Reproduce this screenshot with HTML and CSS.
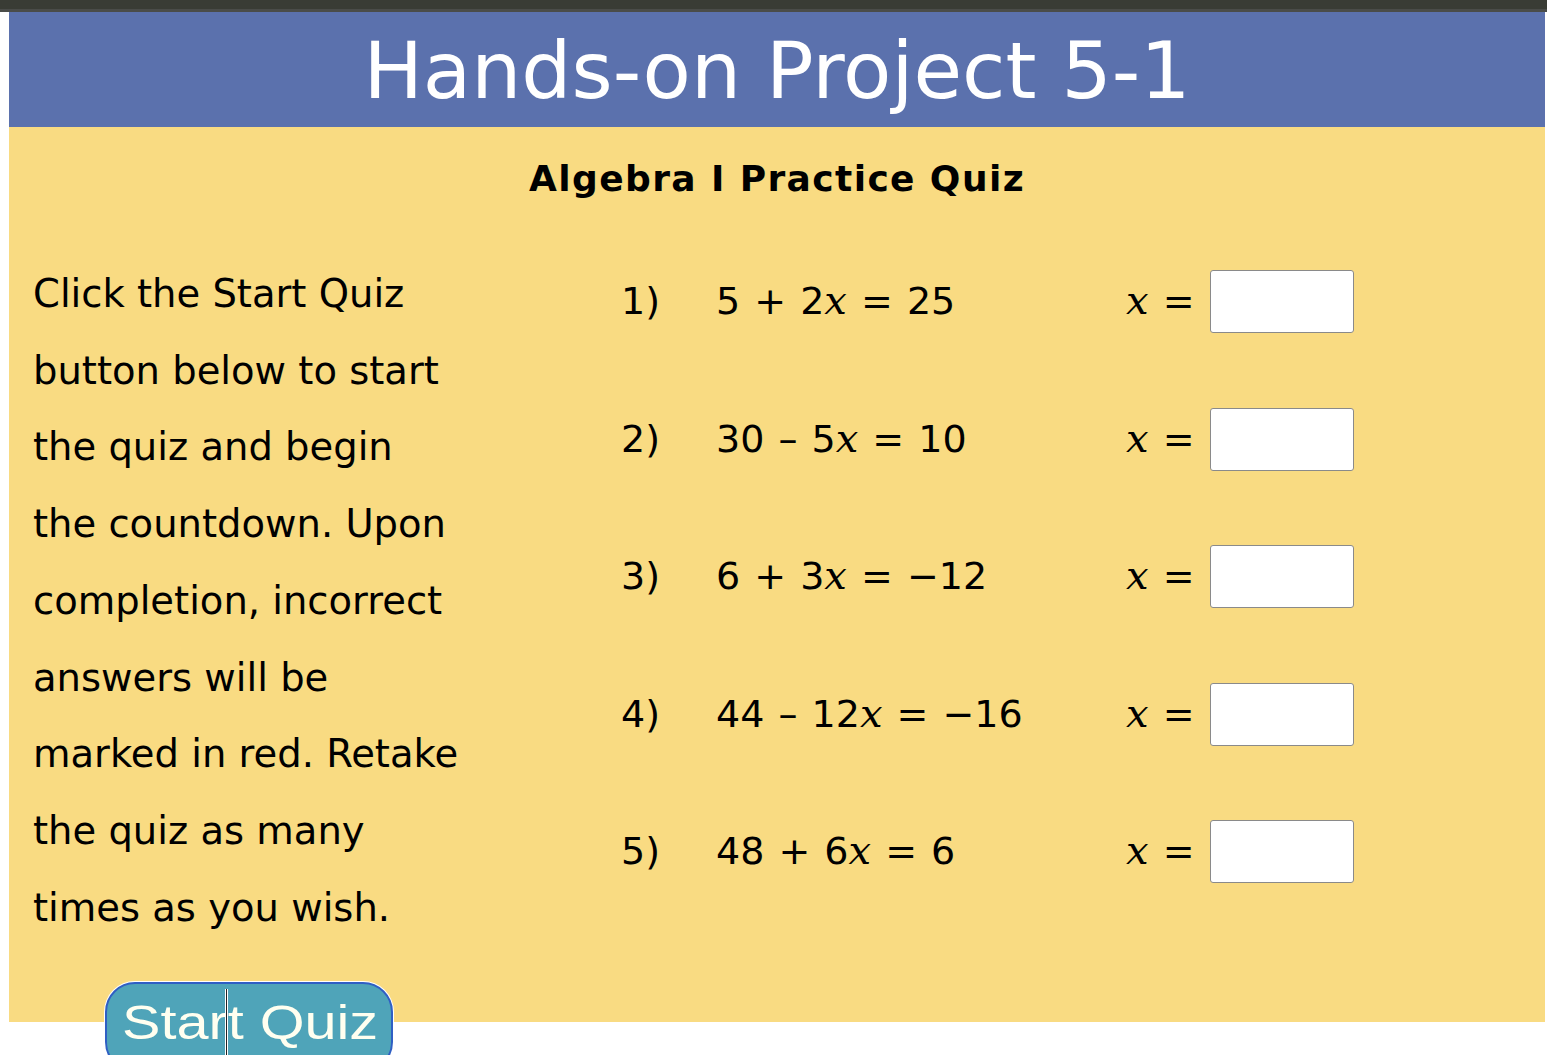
FILE: index.html
```html
<!DOCTYPE html>
<html lang="en">
<head>
<meta charset="utf-8">
<title>Hands-on Project 5-1</title>
<link rel="stylesheet" href="styles.css">
</head>
<body>
<div class="topbar"></div>
<div class="page">
  <header class="banner">
    <h1>Hands-on Project 5-1</h1>
  </header>
  <main class="quiz">
    <h2>Algebra I Practice Quiz</h2>
    <div class="columns">
      <section class="intro">
        <p>Click the Start Quiz<br>button below to start<br>the quiz and begin<br>the countdown. Upon<br>completion, incorrect<br>answers will be<br>marked in red. Retake<br>the quiz as many<br>times as you wish.</p>
        <button class="start" type="button"><span class="label">Start Quiz</span><span class="caret"></span></button>
      </section>
      <section class="questions">
        <div class="row">
          <span class="num">1)</span>
          <span class="eq">5 + 2<i>x</i> = 25</span>
          <label class="ans"><i>x</i> =</label>
          <input class="box" type="text">
        </div>
        <div class="row">
          <span class="num">2)</span>
          <span class="eq">30 – 5<i>x</i> = 10</span>
          <label class="ans"><i>x</i> =</label>
          <input class="box" type="text">
        </div>
        <div class="row">
          <span class="num">3)</span>
          <span class="eq">6 + 3<i>x</i> = −12</span>
          <label class="ans"><i>x</i> =</label>
          <input class="box" type="text">
        </div>
        <div class="row">
          <span class="num">4)</span>
          <span class="eq">44 – 12<i>x</i> = −16</span>
          <label class="ans"><i>x</i> =</label>
          <input class="box" type="text">
        </div>
        <div class="row">
          <span class="num">5)</span>
          <span class="eq">48 + 6<i>x</i> = 6</span>
          <label class="ans"><i>x</i> =</label>
          <input class="box" type="text">
        </div>
      </section>
    </div>
  </main>
</div>
</body>
</html>
```
FILE: styles.css
```css
html {
  overflow: hidden;
}

html, body {
  margin: 0;
  padding: 0;
  background: #ffffff;
}

body {
  font-family: "DejaVu Sans", Verdana, sans-serif;
  color: #000;
  height: 1055px;
}

.topbar {
  height: 9px;
  background: #393c35;
  border-bottom: 3px solid #4a4c49;
}

.page {
  margin-left: 9px;
  width: 1536px;
}

.banner {
  height: 115px;
  background: #5b71ad;
  display: flex;
  justify-content: center;
  align-items: center;
}

.banner h1 {
  margin: 4px 0 0;
  font-family: "DejaVu Sans", Tahoma, sans-serif;
  font-weight: normal;
  font-size: 79px;
  color: #ffffff;
  line-height: 1;
}

.quiz {
  height: 895px;
  background: #f9db82;
  padding-top: 20px;
  box-sizing: border-box;
}

.quiz h2 {
  margin: 0;
  text-align: center;
  font-size: 36px;
  letter-spacing: 1.4px;
  line-height: 64px;
  font-weight: bold;
}

.columns {
  display: grid;
  grid-template-columns: 612px 1fr;
  margin-top: 45px;
}

.intro {
  padding-left: 24px;
}

.intro p {
  margin: 0;
  white-space: nowrap;
  font-size: 38.5px;
  line-height: 76.7px;
}

.start {
  position: relative;
  margin-top: 36px;
  margin-left: 72px;
  width: 288px;
  height: 90px;
  padding: 0;
  background: #4fa4b9;
  border: 2px solid #2f5fc4;
  border-radius: 30px;
  box-shadow: 0 0 0 1px #ffffff;
  color: #fffff0;
  font-family: "Liberation Sans", Arial, sans-serif;
  font-size: 48px;
  text-align: left;
  display: block;
}

.start .label {
  display: inline-block;
  transform-origin: left center;
  transform: scaleX(1.2);
  margin-left: 15px;
  margin-top: -5px;
  vertical-align: top;
}

/* text cursor resting over the button */
.start .caret {
  position: absolute;
  left: 119px;
  top: 5px;
  width: 1px;
  height: 80px;
  background: #222;
  box-shadow: 1px 0 0 #fff, -1px 0 0 #fff;
}

.questions {
  display: flex;
  flex-direction: column;
  gap: 74.5px;
  margin-top: 14px;
}

.row {
  display: flex;
  align-items: center;
  height: 63px;
  font-size: 38px;
  line-height: 63px;
  word-spacing: 2px;
}

.num {
  width: 95px;
}

.eq {
  width: 410px;
}

.row i {
  font-family: "DejaVu Serif", "Times New Roman", serif;
  font-style: italic;
  font-size: 40px;
  line-height: 1;
}

.ans {
  width: 84px;
}

.box {
  width: 144px;
  height: 63px;
  box-sizing: border-box;
  border: 1px solid #8a8a8a;
  border-radius: 3px;
  background: #fff;
  margin: 0;
  padding: 0;
}
```
